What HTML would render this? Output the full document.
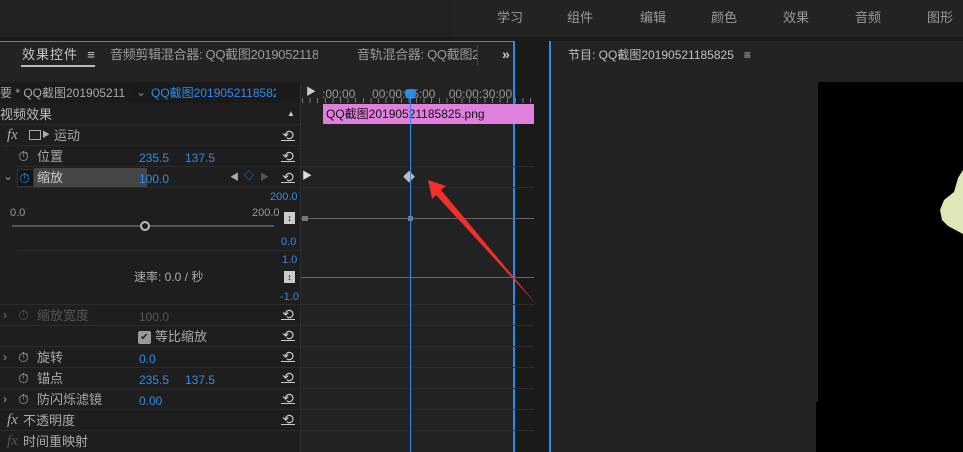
<!DOCTYPE html>
<html><head><meta charset="utf-8"><style>
*{margin:0;padding:0;box-sizing:border-box}
body{width:963px;height:452px;overflow:hidden;background:#1a1a1a;font-family:"Liberation Sans","Noto Sans CJK SC",sans-serif;font-size:12px;color:#b4b4b4;position:relative}
.a{position:absolute;white-space:nowrap;line-height:1.05}
.b{color:#2d8ceb}
.hl{position:absolute;height:1px;background:#2c2c2c}
.r{position:absolute;left:281px;color:#ccc;font-size:14px;line-height:14px;width:14px;border-bottom:1px solid #ccc;height:13px;text-align:center}
</style></head><body>
<!-- top bar -->
<div class="a" style="left:0;top:0;width:963px;height:37px;background:#232323"></div>
<div class="a" style="left:0;top:0;width:451px;height:37px;background:#212121"></div>
<div class="a" style="left:497px;top:11px;font-size:13px;color:#9a9a9a">学习</div>
<div class="a" style="left:567px;top:11px;font-size:13px;color:#9a9a9a">组件</div>
<div class="a" style="left:640px;top:11px;font-size:13px;color:#9a9a9a">编辑</div>
<div class="a" style="left:711px;top:11px;font-size:13px;color:#9a9a9a">颜色</div>
<div class="a" style="left:783px;top:11px;font-size:13px;color:#9a9a9a">效果</div>
<div class="a" style="left:855px;top:11px;font-size:13px;color:#9a9a9a">音频</div>
<div class="a" style="left:927px;top:11px;font-size:13px;color:#9a9a9a">图形</div>

<!-- left panel -->
<div class="a" style="left:0;top:41px;width:515px;height:411px;background:#232323;border-top:1px solid #2d8ceb;border-right:2px solid #2d8ceb"></div>
<div class="a" style="left:22px;top:48px;font-size:13px;color:#c8c8c8;letter-spacing:1px">效果控件 &nbsp;≡</div>
<div class="a" style="left:21px;top:65px;width:74px;height:2px;background:#bbb"></div>
<div class="a" style="left:110px;top:48px;font-size:13px;color:#9a9a9a;width:208px;overflow:hidden;letter-spacing:-0.3px">音频剪辑混合器: QQ截图20190521185825</div>
<div class="a" style="left:357px;top:48px;font-size:13px;color:#9a9a9a;width:120px;overflow:hidden;letter-spacing:-0.3px">音轨混合器: QQ截图20</div>
<div class="a" style="left:477px;top:45px;width:1px;height:20px;background:#444"></div>
<div class="a" style="left:502px;top:47px;color:#ccc;font-weight:bold;font-size:14px">»</div>
<div class="a" style="left:0;top:82px;width:300px;height:370px;background:#1e1e1e"></div>
<div class="a" style="left:300px;top:82px;width:1px;height:370px;background:#2e2e2e"></div>
<div class="a" style="left:301px;top:82px;width:212px;height:370px;background:#222"></div>
<div class="a" style="left:0;top:82px;width:300px;height:21px;background:#1b1b1b"></div>
<div class="a" style="left:0;top:87px;font-size:12px;color:#a8a8a8;width:125px;overflow:hidden">要 * QQ截图2019052118...</div>
<div class="a" style="left:133px;top:83px;width:145px;height:20px;background:#1a1a1a"></div>
<div class="a" style="left:136px;top:86px;color:#888">⌄</div>
<div class="a b" style="left:151px;top:87px;width:125px;overflow:hidden">QQ截图20190521185825...</div>
<div class="a" style="left:306px;top:88px;color:#ccc;font-size:10px">▶</div>
<div class="a" style="left:322px;top:88px;color:#999;width:212px;overflow:hidden">:00:00 &nbsp;&nbsp;&nbsp;&nbsp;00:00:15:00 &nbsp;&nbsp;&nbsp;00:00:30:00</div>
<div class="a" style="left:302px;top:98px;width:232px;height:5px;background:repeating-linear-gradient(90deg,#777 0 1px,transparent 1px 7.6px)"></div>
<div class="a" style="left:0;top:108px;font-size:13px;color:#bbb">视频效果</div>
<div class="a" style="left:287px;top:110px;color:#ccc;font-size:8px">▲</div>
<div class="a" style="left:323px;top:104px;width:211px;height:20px;background:#e080dd;color:#111;padding:4px 3px;font-size:12px;line-height:1">QQ截图20190521185825.png</div>
<div class="hl" style="left:0;top:124px;width:300px"></div>
<div class="a" style="left:7px;top:128px;font-style:italic;font-family:'Liberation Serif',serif;font-size:15px;color:#aaa">fx</div>
<div class="a" style="left:29px;top:130px;width:12px;height:10px;border:1px solid #aaa"></div>
<div class="a" style="left:42px;top:131px;font-size:8px;color:#aaa">▶</div>
<div class="a" style="left:54px;top:129px;font-size:13px;color:#aaa">运动</div>
<!-- rows -->
<div class="hl" style="left:4px;top:145px;width:296px"></div>
<div class="a" style="left:18px;top:149px;font-size:14px;color:#aaa">⏱</div>
<div class="a" style="left:37px;top:150px;font-size:13px;color:#aaa">位置</div>
<div class="a b" style="left:139px;top:152px">235.5</div><div class="a b" style="left:185px;top:152px">137.5</div>
<div class="hl" style="left:17px;top:166px;width:517px"></div>
<div class="a" style="left:3px;top:170px;color:#999">⌄</div>
<div class="a" style="left:17px;top:169px;width:17px;height:18px;border:1px solid #333;background:#151515"></div>
<div class="a b" style="left:19px;top:171px;font-size:14px">⏱</div>
<div class="a" style="left:34px;top:168px;width:113px;height:19px;background:#454545;color:#ccc;font-size:13px;padding:3px 3px;line-height:1">缩放</div>
<div class="a b" style="left:139px;top:173px">100.0</div>
<div class="a" style="left:230px;top:173px;color:#aaa;font-size:9px">◀</div>
<div class="a b" style="left:244px;top:172px;font-size:10px">◇</div>
<div class="a" style="left:260px;top:173px;color:#555;font-size:9px">▶</div>
<div class="a" style="left:302px;top:172px;color:#ddd;font-size:10px">▶</div>
<div class="a" style="left:403px;top:171px;color:#bbb;font-size:12px">◆</div>
<div class="hl" style="left:17px;top:187px;width:283px"></div>
<div class="hl" style="left:301px;top:187px;width:233px"></div>
<div class="a b" style="left:270px;top:192px;font-size:11px">200.0</div>
<div class="a" style="left:10px;top:208px;font-size:11px;color:#999">0.0</div>
<div class="a" style="left:252px;top:208px;font-size:11px;color:#999">200.0</div>
<div class="a" style="left:12px;top:225px;width:262px;height:2px;background:#555"></div>
<div class="a" style="left:140px;top:221px;width:10px;height:10px;border:2px solid #bbb;border-radius:50%;background:#1e1e1e"></div>
<div class="a" style="left:284px;top:212px;width:11px;height:12px;background:#ccc;color:#111;font-size:9px;text-align:center;line-height:12px">↕</div>
<div class="a b" style="left:281px;top:237px;font-size:11px">0.0</div>
<div class="a" style="left:301px;top:218px;width:233px;height:1px;background:#666"></div>
<div class="a" style="left:302px;top:216px;width:6px;height:5px;background:#777"></div>
<div class="a" style="left:408px;top:216px;width:5px;height:5px;background:#777"></div>
<div class="hl" style="left:17px;top:250px;width:283px"></div>
<div class="a b" style="left:282px;top:255px;font-size:11px">1.0</div>
<div class="a" style="left:134px;top:271px;font-size:12px;color:#aaa">速率: 0.0 / 秒</div>
<div class="a" style="left:284px;top:271px;width:11px;height:12px;background:#ccc;color:#111;font-size:9px;text-align:center;line-height:12px">↕</div>
<div class="a b" style="left:280px;top:292px;font-size:11px">-1.0</div>
<div class="a" style="left:301px;top:277px;width:233px;height:1px;background:#666"></div>
<div class="hl" style="left:0;top:304px;width:534px"></div>
<div class="a" style="left:3px;top:309px;color:#777">›</div>
<div class="a" style="left:18px;top:308px;font-size:14px;color:#555">⏱</div>
<div class="a" style="left:37px;top:309px;font-size:13px;color:#555">缩放宽度</div>
<div class="a" style="left:139px;top:311px;color:#555">100.0</div>
<div class="hl" style="left:0;top:325px;width:534px"></div>
<div class="a" style="left:138px;top:331px;width:13px;height:13px;background:#999;border-radius:2px;color:#222;font-size:10px;text-align:center;line-height:13px">✔</div>
<div class="a" style="left:155px;top:330px;font-size:13px;color:#aaa">等比缩放</div>
<div class="hl" style="left:0;top:346px;width:534px"></div>
<div class="a" style="left:3px;top:351px;color:#999">›</div>
<div class="a" style="left:18px;top:350px;font-size:14px;color:#aaa">⏱</div>
<div class="a" style="left:37px;top:351px;font-size:13px;color:#aaa">旋转</div>
<div class="a b" style="left:139px;top:353px">0.0</div>
<div class="hl" style="left:0;top:367px;width:534px"></div>
<div class="a" style="left:18px;top:371px;font-size:14px;color:#aaa">⏱</div>
<div class="a" style="left:37px;top:372px;font-size:13px;color:#aaa">锚点</div>
<div class="a b" style="left:139px;top:374px">235.5</div><div class="a b" style="left:185px;top:374px">137.5</div>
<div class="hl" style="left:0;top:388px;width:534px"></div>
<div class="a" style="left:3px;top:393px;color:#999">›</div>
<div class="a" style="left:18px;top:392px;font-size:14px;color:#aaa">⏱</div>
<div class="a" style="left:37px;top:393px;font-size:13px;color:#aaa">防闪烁滤镜</div>
<div class="a b" style="left:139px;top:395px">0.00</div>
<div class="hl" style="left:0;top:409px;width:534px"></div>
<div class="a" style="left:7px;top:413px;font-style:italic;font-family:'Liberation Serif',serif;font-size:15px;color:#aaa">fx</div>
<div class="a" style="left:23px;top:414px;font-size:13px;color:#aaa">不透明度</div>
<div class="hl" style="left:0;top:430px;width:534px"></div>
<div class="a" style="left:7px;top:434px;font-style:italic;font-family:'Liberation Serif',serif;font-size:15px;color:#555">fx</div>
<div class="a" style="left:23px;top:435px;font-size:13px;color:#aaa">时间重映射</div>
<!-- reset icons -->
<div class="r" style="top:128px">⟲</div>
<div class="r" style="top:149px">⟲</div>
<div class="r" style="top:170px">⟲</div>
<div class="r" style="top:307px">⟲</div>
<div class="r" style="top:328px">⟲</div>
<div class="r" style="top:349px">⟲</div>
<div class="r" style="top:370px">⟲</div>
<div class="r" style="top:391px">⟲</div>
<div class="r" style="top:412px">⟲</div>
<!-- playhead -->
<div class="a" style="left:410px;top:92px;width:1px;height:360px;background:#2d8ceb"></div>
<div class="a" style="left:405px;top:89px;width:11px;height:10px;background:#2d8ceb;border-radius:3px 3px 5px 5px"></div>
<!-- right panel -->
<div class="a" style="left:549px;top:41px;width:2px;height:411px;background:#2d8ceb"></div>
<div class="a" style="left:551px;top:41px;width:412px;height:411px;background:#232323"></div>
<div class="a" style="left:568px;top:49px;font-size:12px;color:#c0c0c0">节目: QQ截图20190521185825 &nbsp;&nbsp;≡</div>
<div class="a" style="left:818px;top:82px;width:145px;height:370px;background:#000"></div>
<div class="a" style="left:816px;top:402px;width:3px;height:50px;background:#000"></div>
<svg class="a" style="left:940px;top:170px" width="23" height="64"><path d="M23 0 L18 8 L14 22 L4 30 L0 40 L2 50 L8 56 L23 64 Z" fill="#dfe6b5"/></svg>
<!-- red arrow -->
<svg class="a" style="left:0;top:0" width="963" height="452"><path d="M428 180 L446 186 L441 190 L537 305 L436 195 L432 199 Z" fill="#f0302a"/></svg>
</body></html>
